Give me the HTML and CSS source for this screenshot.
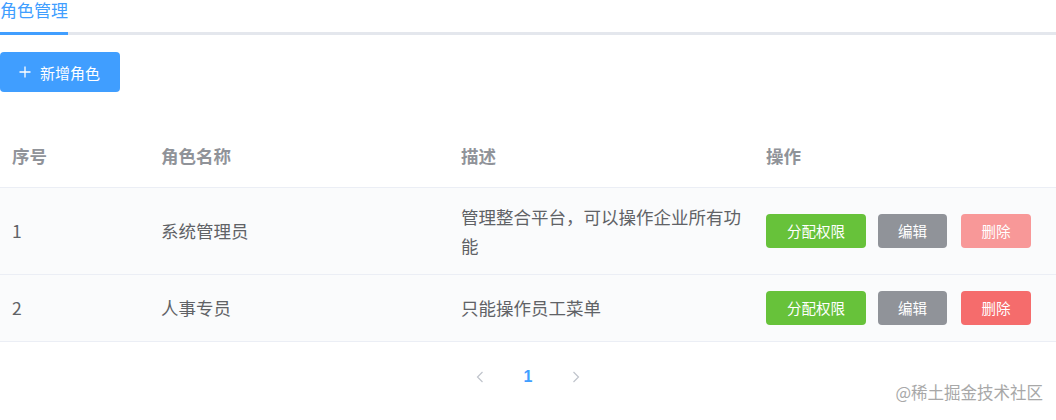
FILE: index.html
```html
<!DOCTYPE html>
<html lang="zh-CN">
<head>
    <meta charset="UTF-8">
    <title>角色管理</title>
    <link rel="stylesheet" href="styles.css">
</head>
<body>
    <div class="tabs">
        <div class="tab active">角色管理</div>
    </div>

    <div class="toolbar">
        <button class="btn btn-primary btn-add">
            <svg width="12" height="12" viewBox="0 0 12 12"><path d="M6 0.5v11M0.5 6h11" stroke="#fff" stroke-width="1.3" fill="none"/></svg>
            <span>新增角色</span>
        </button>
    </div>

    <table class="role-table">
        <colgroup>
            <col style="width:149px">
            <col style="width:300px">
            <col style="width:305px">
            <col>
        </colgroup>
        <thead>
            <tr>
                <th>序号</th>
                <th>角色名称</th>
                <th>描述</th>
                <th>操作</th>
            </tr>
        </thead>
        <tbody>
            <tr>
                <td>1</td>
                <td>系统管理员</td>
                <td>管理整合平台，可以操作企业所有功能</td>
                <td>
                    <div class="actions">
                        <button class="btn btn-success btn-wide">分配权限</button>
                        <button class="btn btn-info">编辑</button>
                        <button class="btn btn-danger is-disabled">删除</button>
                    </div>
                </td>
            </tr>
            <tr>
                <td>2</td>
                <td>人事专员</td>
                <td>只能操作员工菜单</td>
                <td>
                    <div class="actions">
                        <button class="btn btn-success btn-wide">分配权限</button>
                        <button class="btn btn-info">编辑</button>
                        <button class="btn btn-danger">删除</button>
                    </div>
                </td>
            </tr>
        </tbody>
    </table>

    <div class="pager">
        <span class="pager-btn">
            <svg width="8" height="12" viewBox="0 0 8 12"><path d="M6.5 1L1.5 6l5 5" stroke="#c0c4cc" stroke-width="1.2" fill="none"/></svg>
        </span>
        <span class="pager-btn current">1</span>
        <span class="pager-btn">
            <svg width="8" height="12" viewBox="0 0 8 12"><path d="M1.5 1l5 5-5 5" stroke="#c0c4cc" stroke-width="1.2" fill="none"/></svg>
        </span>
    </div>

    <div class="watermark">@稀土掘金技术社区</div>
</body>
</html>
```

FILE: styles.css
```css
* {
    margin: 0;
    padding: 0;
    box-sizing: border-box;
}

body {
    position: relative;
    width: 1056px;
    height: 420px;
    overflow: hidden;
    background: #fff;
    color: #606266;
    font-family: "Noto Sans CJK SC", "Liberation Sans", sans-serif;
}

.tabs {
    margin-top: -6px;
    border-bottom: 3px solid #e4e7ed;
    display: flex;
}

.tab {
    font-size: 17px;
    line-height: 32px;
    height: 41px;
    padding-bottom: 6px;
    margin-bottom: -3px;
    color: #303133;
}

.tab.active {
    color: #409eff;
    border-bottom: 3px solid #409eff;
}

.toolbar {
    margin-top: 17px;
    display: flex;
}

.btn {
    border: none;
    border-radius: 4px;
    color: #fff;
    font-family: inherit;
    font-size: 14.5px;
    height: 34px;
    width: 70px;
    cursor: pointer;
}

.btn-primary {
    background: #409eff;
}

.btn-add {
    width: 120px;
    height: 40px;
    font-size: 15px;
    display: flex;
    align-items: center;
    gap: 9px;
    padding-left: 19px;
}

.btn-success {
    background: #67c23a;
}

.btn-info {
    background: #909399;
}

.btn-danger {
    background: #f56c6c;
}

.btn-danger.is-disabled {
    background: #f89898;
}

.btn-wide {
    width: 100px;
}

.role-table {
    margin-top: 32px;
    width: 100%;
    border-collapse: collapse;
    table-layout: fixed;
    font-size: 17.5px;
}

.role-table th {
    text-align: left;
    font-weight: bold;
    color: #909399;
    height: 63px;
    padding: 0 12px;
    border-bottom: 1px solid #ebeef5;
}

.role-table td {
    padding: 14px 12px;
    line-height: 29px;
    background: #fafbfc;
    border-bottom: 1px solid #ebeef5;
    vertical-align: middle;
}

.actions {
    display: flex;
    align-items: center;
    gap: 12px;
    height: 38px;
}

.actions .btn-info {
    width: 69px;
    margin-right: 2px;
}

.pager {
    margin-top: 20px;
    display: flex;
    justify-content: center;
    gap: 12px;
}

.pager-btn {
    width: 36px;
    height: 30px;
    display: flex;
    align-items: center;
    justify-content: center;
    font-size: 16px;
    font-weight: bold;
    font-family: "Liberation Sans", sans-serif;
}

.pager-btn.current {
    color: #409eff;
}

.watermark {
    position: absolute;
    right: 13px;
    bottom: 16px;
    font-size: 16.5px;
    color: #a8a8a8;
}
```
